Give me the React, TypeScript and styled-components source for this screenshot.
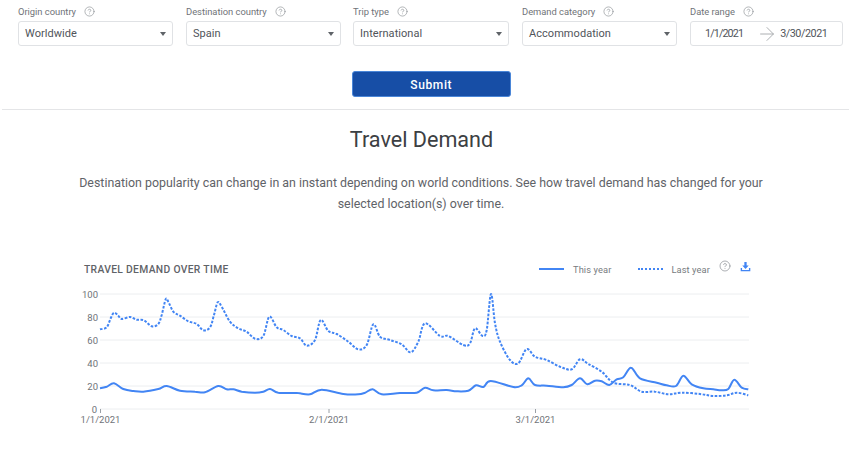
import React from "react";
import styled, { createGlobalStyle } from "styled-components";
import { CircleHelp, ArrowRight } from "lucide-react";

const Global = createGlobalStyle`
  html, body { margin: 0; padding: 0; background: #fff; }
  body { font-family: Roboto, "Liberation Sans", sans-serif; overflow: hidden; }
`;

const Page = styled.div`
  width: 849px;
  height: 454px;
  overflow: hidden;
`;

const Filters = styled.div`
  display: flex;
  padding: 5px 0 0 18px;
`;

const Filter = styled.div<{ $w: number; $mr: number }>`
  width: ${(p) => p.$w}px;
  margin-right: ${(p) => p.$mr}px;
  flex: none;
`;

const LabelRow = styled.div`
  display: flex;
  align-items: center;
  gap: 8px;
  height: 13px;
  margin-bottom: 3px;
  font-size: 9.4px;
  letter-spacing: -0.02px;
  color: #6f7378;
`;

const Help = styled(CircleHelp)`
  color: #8a8e93;
  flex: none;
`;

const Field = styled.div`
  box-sizing: border-box;
  height: 25px;
  border: 1px solid #e0e2e5;
  border-radius: 3px;
  display: flex;
  align-items: center;
  padding: 0 6px 0 6px;
  font-size: 11px;
  letter-spacing: 0.05px;
  color: #50545a;
  justify-content: space-between;
`;

const Caret = styled.span`
  width: 0;
  height: 0;
  border-left: 3.5px solid transparent;
  border-right: 3.5px solid transparent;
  border-top: 4px solid #5f6368;
`;

const DateField = styled(Field)`
  padding: 0 0 0 14px;
  justify-content: flex-start;
  font-size: 10.8px;
`;

const DateText = styled.span<{ $ls: number }>`
  letter-spacing: ${(p) => p.$ls}px;
`;

const DateArrow = styled(ArrowRight)`
  color: #a4a7ab;
  margin: 0 2px 0 13px;
  flex: none;
`;

const SubmitRow = styled.div`
  display: flex;
  justify-content: flex-start;
  margin: 25px 0 12px 352px;
`;

const Submit = styled.button`
  box-sizing: border-box;
  width: 158.5px;
  height: 26px;
  background: #174ea6;
  border: 1px solid #4a86d8;
  border-radius: 3px;
  color: #fff;
  font: 500 12px Roboto, sans-serif;
  letter-spacing: 0.6px;
  padding: 1px 0 0;
`;

const Divider = styled.hr`
  margin: 0 0 0 2px;
  border: 0;
  border-top: 1px solid #e4e5e7;
`;

const Title = styled.h1`
  margin: 15px 0 0 -6px;
  font: 400 21.6px/30px Roboto, sans-serif;
  color: #3c4043;
  text-align: center;
`;

const Intro = styled.p`
  width: 720px;
  margin: 17px 0 0 61px;
  font: 400 12.4px/21px Roboto, sans-serif;
  color: #5f6368;
  text-align: center;
`;

const ChartHead = styled.div`
  display: flex;
  align-items: center;
  height: 14px;
  margin: 48px 0 0 84px;
  width: 667px;
`;

const ChartTitle = styled.div`
  flex: 1;
  font-size: 10.3px;
  font-weight: 500;
  letter-spacing: 0.33px;
  color: #5f6368;
`;

const Legend = styled.div`
  display: flex;
  align-items: center;
  font-size: 9.3px;
  color: #777b80;
  letter-spacing: 0.1px;
`;

const LegendSwatch = styled.span<{ $dashed?: boolean; $mr: number }>`
  width: 25px;
  height: 0;
  border-top: 2px ${(p) => (p.$dashed ? "dotted" : "solid")} #4285f4;
  margin-right: ${(p) => p.$mr}px;
`;

const LegendLabel = styled.span<{ $mr: number }>`
  margin-right: ${(p) => p.$mr}px;
`;

const ChartHelp = styled(Help)`
  margin: -6px 0 0 0;
`;

const DownloadIcon = styled.svg`
  fill: #4285f4;
  flex: none;
  margin: -6px 0 0 9px;
`;

const ChartSvg = styled.svg`
  display: block;
  margin: 0;
  font-family: Roboto, sans-serif;
`;

const AxisLabel = styled.text`
  font-size: 9.5px;
  fill: #6f7378;
`;

const OFFSET_Y = 276;

type P = [number, number];
const z = (ox: number, oy: number, arr: P[]): P[] =>
  arr.map(([a, b]) => [ox + a / 3, oy + b / 3]);

const lastYear: P[] = [
  ...z(70, 250, [[90,238],[110,232],[122,205],[132,188],[145,197],[155,207],[180,201],[200,209],[222,211],[245,229],[265,222],[275,195],[287,148],[295,155],[310,185],[330,197],[355,214],[380,222],[400,241],[420,232],[432,195],[443,157],[455,170],[480,215],[505,235],[530,245],[555,266],[580,258],[598,200],[620,232],[640,240],[665,258]]),
  ...z(300, 280, [[0,175],[20,197],[45,180],[62,120],[85,153],[110,162],[145,185],[175,208],[200,195],[220,133],[240,170],[270,180],[305,193],[332,217],[355,185],[375,130],[420,168],[445,168],[490,195],[510,190],[525,145],[548,168],[560,150],[573,42],[585,130],[600,185],[630,240],[655,250],[680,207]]),
  ...z(530, 250, [[15,320],[50,330],[90,350],[125,358],[150,328],[175,342],[215,365],[250,398],[300,405],[335,425],[375,425],[415,433],[455,428],[510,432],[550,438],[590,436],[620,428],[655,436]]),
];

const thisYear: P[] = [
  ...z(70, 250, [[90,415],[110,410],[132,400],[160,417],[190,423],[220,425],[265,417],[290,408],[330,422],[375,425],[405,427],[445,408],[470,418],[490,418],[515,425],[555,428],[580,425],[600,417],[625,428],[680,429]]),
  ...z(300, 280, [[0,340],[30,343],[65,329],[130,342],[175,343],[195,338],[218,328],[245,343],[300,339],[350,338],[375,323],[400,331],[440,330],[470,334],[505,332],[528,316],[550,321],[572,303],[640,321],[665,316],[685,295]]),
  ...z(530, 250, [[15,405],[50,407],[100,412],[125,405],[150,385],[172,403],[195,392],[215,394],[238,405],[260,388],[280,382],[303,353],[330,385],[380,398],[410,406],[438,408],[460,377],[485,403],[520,415],[550,418],[575,421],[595,417],[613,389],[635,413],[655,418]]),
];

function smooth(points: P[]): string {
  const pts = points.map(([x, y]) => [x, y - OFFSET_Y] as P);
  let d = `M${pts[0][0].toFixed(1)} ${pts[0][1].toFixed(1)}`;
  for (let i = 0; i < pts.length - 1; i++) {
    const p0 = pts[Math.max(0, i - 1)];
    const p1 = pts[i];
    const p2 = pts[i + 1];
    const p3 = pts[Math.min(pts.length - 1, i + 2)];
    const c1x = p1[0] + (p2[0] - p0[0]) / 6;
    const c1y = p1[1] + (p2[1] - p0[1]) / 6;
    const c2x = p2[0] - (p3[0] - p1[0]) / 6;
    const c2y = p2[1] - (p3[1] - p1[1]) / 6;
    d += `C${c1x.toFixed(1)} ${c1y.toFixed(1)} ${c2x.toFixed(1)} ${c2y.toFixed(1)} ${p2[0].toFixed(1)} ${p2[1].toFixed(1)}`;
  }
  return d;
}

const ticks = [100, 80, 60, 40, 20, 0];
const yOf = (v: number) => 409 - OFFSET_Y - v * 1.15;

const dates = [
  { label: "1/1/2021", x: 100.5 },
  { label: "2/1/2021", x: 329 },
  { label: "3/1/2021", x: 535.5 },
];

const filters = [
  { label: "Origin country", value: "Worldwide", w: 155, mr: 13 },
  { label: "Destination country", value: "Spain", w: 155, mr: 12 },
  { label: "Trip type", value: "International", w: 156, mr: 13 },
  { label: "Demand category", value: "Accommodation", w: 155, mr: 13 },
];

export default function App() {
  return (
    <Page>
      <Global />
      <Filters>
        {filters.map((f) => (
          <Filter key={f.label} $w={f.w} $mr={f.mr}>
            <LabelRow>
              {f.label}
              <Help size={11} strokeWidth={1.4} />
            </LabelRow>
            <Field>
              {f.value}
              <Caret />
            </Field>
          </Filter>
        ))}
        <Filter $w={153} $mr={0}>
          <LabelRow>
            Date range
            <Help size={11} strokeWidth={1.4} />
          </LabelRow>
          <DateField>
            <DateText $ls={-0.9}>1/1/2021</DateText>
            <DateArrow size={22} strokeWidth={1} />
            <DateText $ls={-0.45}>3/30/2021</DateText>
          </DateField>
        </Filter>
      </Filters>
      <SubmitRow>
        <Submit>Submit</Submit>
      </SubmitRow>
      <Divider />
      <Title>Travel Demand</Title>
      <Intro>
        Destination popularity can change in an instant depending on world conditions. See how travel demand has changed for your selected location(s) over time.
      </Intro>
      <ChartHead>
        <ChartTitle>TRAVEL DEMAND OVER TIME</ChartTitle>
        <Legend>
          <LegendSwatch $mr={9} />
          <LegendLabel $mr={27}>This year</LegendLabel>
          <LegendSwatch $dashed $mr={8} />
          <LegendLabel $mr={9}>Last year</LegendLabel>
        </Legend>
        <ChartHelp size={12} strokeWidth={1.4} />
        <DownloadIcon width={11} height={11} viewBox="0 0 24 24">
          <path d="M9.5 2h5v8h4.5l-7 7.5L5 10h4.5z" />
          <path d="M1.5 15.5v7h21v-7h-3v4h-15v-4z" />
        </DownloadIcon>
      </ChartHead>
      <ChartSvg width={849} height={178} viewBox="0 0 849 178">
        {ticks.map((t) => (
          <g key={t}>
            <line x1={100} x2={749} y1={yOf(t)} y2={yOf(t)} stroke="#eceef0" strokeWidth={1} />
            <AxisLabel x={t === 0 ? 97 : 98} y={yOf(t) + 3.5} textAnchor="end">{t}</AxisLabel>
          </g>
        ))}
        {dates.map((d) => (
          <g key={d.label}>
            <line x1={d.x} x2={d.x} y1={yOf(0)} y2={yOf(0) + 4} stroke="#9aa0a6" strokeWidth={1} />
            <AxisLabel x={d.x} y={yOf(0) + 14} textAnchor="middle">{d.label}</AxisLabel>
          </g>
        ))}
        <path d={smooth(lastYear)} fill="none" stroke="#4285f4" strokeWidth={2} strokeDasharray="2.6 1.5" />
        <path d={smooth(thisYear)} fill="none" stroke="#4285f4" strokeWidth={2} />
      </ChartSvg>
    </Page>
  );
}
